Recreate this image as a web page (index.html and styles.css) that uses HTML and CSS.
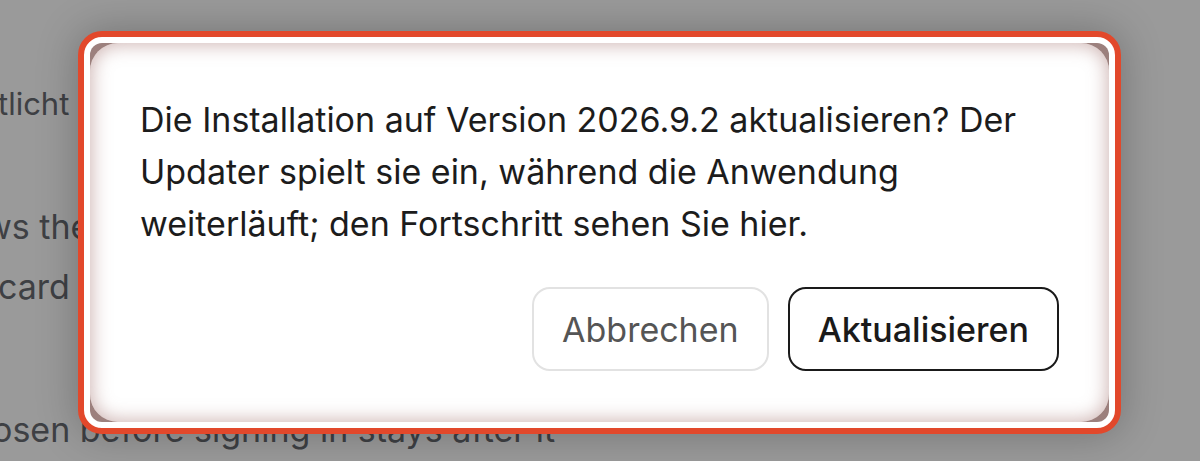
FILE: index.html
```html
<!DOCTYPE html>
<html lang="de">
<head>
  <meta charset="UTF-8" />
  <title>Update</title>
  <link rel="stylesheet" href="styles.css">
</head>
<body>

  <div class="page">
    <p class="line line-a">tlicht</p>
    <p class="line line-b">ws the selected theme on every</p>
    <p class="line line-c">card</p>
    <p class="line line-d">osen before signing in stays after it</p>
  </div>

  <!-- Update-Dialog -->
  <div class="dialog" role="dialog">
    <div class="dialog-inner">
      <div class="panel">
        <p class="message">Die Installation auf Version 2026.9.2 aktualisieren? Der Updater spielt sie ein, während die Anwendung weiterläuft; den Fortschritt sehen Sie hier.</p>
        <div class="actions">
          <button class="btn btn-cancel">Abbrechen</button>
          <button class="btn btn-confirm">Aktualisieren</button>
        </div>
      </div>
    </div>
  </div>

</body>
</html>
```

FILE: styles.css
```css
body {
  font-family: Inter, "Noto Sans", sans-serif;
  background: #9a9a9a;
  margin: 0;
  height: 461px;
  overflow: hidden;
}

.page {
  margin-left: -2px;
  color: #3e4044;
}

.line {
  margin: 0;
  line-height: 60px;
  white-space: nowrap;
}

.line-a {
  font-size: 31px;
  padding-top: 74px;
}

.line-b,
.line-c {
  font-size: 34px;
}

.line-b {
  margin-top: 63px;
  margin-left: -14px;
}

.line-d {
  font-size: 34px;
  margin-top: 83px;
  margin-left: -6px;
}

/* Dialog */
.dialog {
  position: fixed;
  top: 31px;
  left: 78px;
  width: 1043px;
  box-sizing: border-box;
  border: 6px solid #e2482b;
  border-radius: 24px;
  background: #fff;
  padding: 6px;
  box-shadow: 0 0 40px rgba(0,0,0,0.25);
}

.dialog-inner {
  background: #9c807d;
  border-radius: 12px;
}

.panel {
  background: #fff;
  border-radius: 28px;
  padding: 51px 50px 51px;
  box-shadow: inset 0 0 18px 2px rgba(160,110,105,0.5);
}

.message {
  margin: 0;
  font-size: 34px;
  line-height: 52px;
  color: #1c1c1c;
}

.actions {
  display: flex;
  justify-content: flex-end;
  gap: 19px;
  margin-top: 37px;
}

.btn {
  font-family: inherit;
  font-size: 34px;
  height: 84px;
  padding: 0 28px;
  border-radius: 18px;
  background: #fff;
  cursor: pointer;
}

.btn-cancel {
  border: 2px solid #e2e2e2;
  color: #555;
}

.btn-confirm {
  border: 2px solid #1a1a1a;
  color: #1a1a1a;
  font-weight: 500;
}
```
